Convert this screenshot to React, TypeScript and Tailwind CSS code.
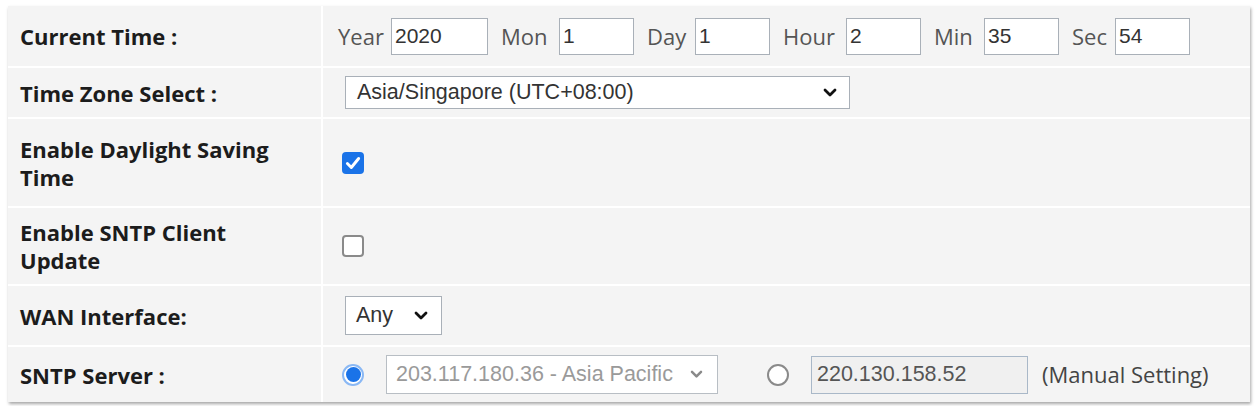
import React from 'react';

const labelFont = { fontFamily: '"Open Sans", "Noto Sans", sans-serif' };
const fieldFont = { fontFamily: '"Liberation Sans", Arial, sans-serif' };

const Chevron = ({ className = '' }: { className?: string }) => (
  <svg viewBox="0 0 14 10" className={className} fill="none" stroke="currentColor" strokeWidth={2.8} strokeLinecap="round" strokeLinejoin="round">
    <polyline points="2,2 7,7 12,2" />
  </svg>
);

// label widths include the small gap before the box
const TimeField = ({ label, value, labelW, boxW }: { label: string; value: string; labelW: string; boxW: string }) => (
  <div className="flex items-center">
    <span className={`${labelW} text-[22px] text-[#555]`} style={labelFont}>{label}</span>
    <div className={`${boxW} h-[37px] border border-[#a9b0b8] bg-white flex items-center pl-[3px] text-[21px] text-[#333]`} style={fieldFont}>
      {value}
    </div>
  </div>
);

const Row = ({ label, height, children }: { label: React.ReactNode; height: string; children: React.ReactNode }) => (
  <>
    <div className={`${height} bg-[#f4f4f4] flex items-center pl-[12px] text-[22px] font-bold text-[#1c1c1c] leading-[28px]`} style={labelFont}>
      {label}
    </div>
    <div className={`${height} bg-[#f4f4f4] flex items-center pl-[15px]`}>{children}</div>
  </>
);

export default function App() {
  return (
    <div className="w-[1256px] h-[406px] bg-white pt-[6px] pl-[8px]">
      <div className="w-[1242px] grid grid-cols-[313px_1fr] gap-[2px] bg-white shadow-[1px_2px_3px_rgba(0,0,0,0.35)]">
        <Row label="Current Time :" height="h-[60px]">
          <div className="flex items-center gap-[13px]">
            <TimeField label="Year" value="2020" labelW="w-[53px]" boxW="w-[97px]" />
            <TimeField label="Mon" value="1" labelW="w-[58px]" boxW="w-[75px]" />
            <TimeField label="Day" value="1" labelW="w-[48px]" boxW="w-[75px]" />
            <TimeField label="Hour" value="2" labelW="w-[63px]" boxW="w-[75px]" />
            <TimeField label="Min" value="35" labelW="w-[50px]" boxW="w-[75px]" />
            <TimeField label="Sec" value="54" labelW="w-[43px]" boxW="w-[75px]" />
          </div>
        </Row>
        <Row label="Time Zone Select :" height="h-[49px]">
          <div className="ml-[7px] w-[505px] h-[33px] border border-[#a9b0b8] bg-white flex items-center justify-between pl-[11px] pr-[12px] text-[21.5px] text-[#333]" style={fieldFont}>
            <span>Asia/Singapore (UTC+08:00)</span>
            <Chevron className="w-[14px] h-[10px] text-[#111]" />
          </div>
        </Row>
        <Row label={<span className="w-[270px]">Enable Daylight Saving Time</span>} height="h-[87px]">
          <div className="ml-[4px] w-[22px] h-[22px] rounded-[4px] bg-[#1a73e8] flex items-center justify-center">
            <svg viewBox="0 0 16 16" className="w-[18px] h-[18px]" fill="none" stroke="white" strokeWidth={2.6} strokeLinecap="round" strokeLinejoin="round">
              <polyline points="3,8.5 6.5,12 13,4" />
            </svg>
          </div>
        </Row>
        <Row label={<span className="w-[240px]">Enable SNTP Client Update</span>} height="h-[76px]">
          <div className="ml-[4px] w-[22px] h-[22px] rounded-[4px] border-[2px] border-[#8a8a8a] bg-white" />
        </Row>
        <Row label="WAN Interface:" height="h-[59px]">
          <div className="ml-[7px] w-[97px] h-[39px] border border-[#a9b0b8] bg-white flex items-center justify-between pl-[10px] pr-[13px] text-[21.5px] text-[#333]" style={fieldFont}>
            <span>Any</span>
            <Chevron className="w-[14px] h-[10px] text-[#111]" />
          </div>
        </Row>
        <Row label="SNTP Server :" height="h-[55px]">
          <div className="flex items-center">
            <div className="ml-[4px] w-[22px] h-[22px] rounded-full border-[2px] border-[#8ab8f4] bg-white flex items-center justify-center">
              <div className="w-[15px] h-[15px] rounded-full bg-[#1a73e8]" />
            </div>
            <div className="ml-[22px] w-[332px] h-[39px] border border-[#b8bec4] bg-white flex items-center justify-between pl-[9px] pr-[14px] text-[21.5px] text-[#9a9a9a]" style={fieldFont}>
              <span>203.117.180.36 - Asia Pacific</span>
              <Chevron className="w-[13px] h-[9px] text-[#8a8a8a]" />
            </div>
            <div className="ml-[49px] w-[22px] h-[22px] rounded-full border-[2px] border-[#8a8a8a] bg-white" />
            <div className="ml-[22px] w-[217px] h-[38px] border border-[#a9b8c8] bg-[#f0f0f0] flex items-center pl-[5px] text-[21.5px] text-[#555]" style={fieldFont}>
              220.130.158.52
            </div>
            <span className="ml-[14px] text-[22px] text-[#444]" style={labelFont}>(Manual Setting)</span>
          </div>
        </Row>
      </div>
    </div>
  );
}
